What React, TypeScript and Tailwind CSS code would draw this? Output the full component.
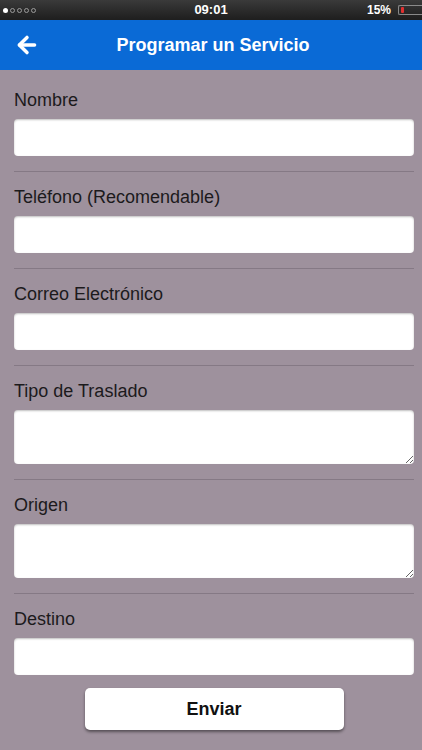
import React from 'react';
import { ArrowLeft } from 'lucide-react';

const fields = [
  { label: 'Nombre', area: false },
  { label: 'Teléfono (Recomendable)', area: false },
  { label: 'Correo Electrónico', area: false },
  { label: 'Tipo de Traslado', area: true },
  { label: 'Origen', area: true },
  { label: 'Destino', area: false },
];

function StatusBar() {
  return (
    <div className="h-[20px] bg-gradient-to-b from-[#3a3a3a] to-[#1e1e1e] flex items-center justify-between text-white relative">
      <div className="flex items-center gap-[2px] pl-[3px]">
        <span className="w-[5px] h-[5px] rounded-full bg-white" />
        {[0, 1, 2, 3].map(i => (
          <span key={i} className="w-[5px] h-[5px] rounded-full border border-[#9a9a9a]" />
        ))}
      </div>
      <span className="absolute left-0 right-0 text-center text-[13px] font-bold leading-[20px]">09:01</span>
      <div className="flex items-center gap-[7px]">
        <span className="text-[12px] font-bold">15%</span>
        <div className="w-[24px] h-[10px] border border-[#8a8a8a] rounded-l-[2px] border-r-0 flex items-center pl-[2px]">
          <span className="w-[3px] h-[6px] bg-[#e23030] rounded-[1px]" />
        </div>
      </div>
    </div>
  );
}

export default function App() {
  return (
    <div className="w-[422px] h-[750px] flex flex-col bg-[#9e919d] overflow-hidden" style={{ fontFamily: '"Liberation Sans", Arial, sans-serif' }}>
      <StatusBar />
      <div className="h-[50px] bg-[#0a6ad6] flex items-center text-white relative">
        <ArrowLeft className="w-[26px] h-[26px] ml-[14px]" strokeWidth={3.2} />
        <span className="absolute left-[4px] right-0 text-center text-[18px] font-bold">Programar un Servicio</span>
      </div>

      <div className="flex-1 overflow-hidden pl-[14px] pr-[8px] pt-[5px]">
        {fields.map((f, i) => (
          <div key={f.label} className={i < fields.length - 1 ? 'border-b border-[#857985]' : ''}>
            <div className="pt-[15px] pb-[15px]">
              <p className="text-[18px] leading-[20px] text-[#1c1a1c] mb-[9px]">{f.label}</p>
              {f.area ? (
                <textarea className="block w-full h-[54px] bg-white rounded-[4px] shadow-[inset_0_1px_2px_rgba(0,0,0,0.25)] resize-y outline-none" />
              ) : (
                <input className="block w-full h-[37px] bg-white rounded-[4px] shadow-[inset_0_1px_2px_rgba(0,0,0,0.25)] outline-none" />
              )}
            </div>
          </div>
        ))}
      </div>

      <div className="flex justify-center pl-[14px] pr-[8px] pt-[13px] pb-[20px]">
        <button className="w-[259px] h-[42px] bg-white rounded-[5px] shadow-[0_2px_3px_rgba(0,0,0,0.45)] text-[18px] font-bold text-[#111]">
          Enviar
        </button>
      </div>
    </div>
  );
}
